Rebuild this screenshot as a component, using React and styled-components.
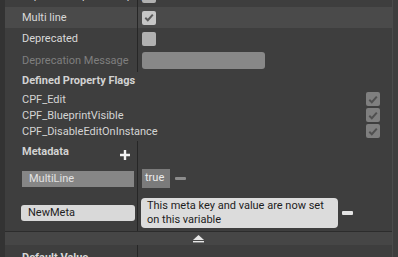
import styled, { createGlobalStyle } from "styled-components";

const GlobalStyle = createGlobalStyle`
  html, body {
    margin: 0;
    padding: 0;
    background: #3e3e3e;
  }
  body {
    font-family: Roboto, "Noto Sans", "Liberation Sans", sans-serif;
    font-size: 11px;
    color: #d8d8d8;
  }
`;

const Frame = styled.div`
  width: 398px;
  height: 257px;
  overflow: hidden;
  display: flex;
  background: #3e3e3e;
`;

const LeftStrip = styled.div`
  width: 5px;
  flex-shrink: 0;
  background: #333333;
`;

const Panel = styled.div`
  width: 387px;
  flex-shrink: 0;
  border-right: 1px solid #4b4b4b;
  display: flex;
  flex-direction: column;
  & > * {
    flex-shrink: 0;
  }
`;

const Scroll = styled.div`
  margin-top: -16px;
  display: flex;
  flex-direction: column;
`;

const Row = styled.div`
  display: grid;
  grid-template-columns: 132px 1px 1fr;
  height: ${(p) => p.h}px;
  flex-shrink: 0;
  background: ${(p) => (p.hl ? "#4a4a4a" : "transparent")};
`;

const Label = styled.div`
  display: flex;
  align-items: center;
  padding-left: 17px;
  color: ${(p) => (p.disabled ? "#7f7f7f" : "#d8d8d8")};
  font-weight: ${(p) => (p.bold ? 700 : 400)};
  white-space: nowrap;
`;

const Divider = styled.div`
  background: #262626;
`;

const Value = styled.div`
  display: flex;
  align-items: center;
  padding-left: ${(p) => p.pad ?? 4}px;
  gap: ${(p) => p.gap ?? 5}px;
`;

const Box = styled.div`
  width: 14px;
  height: 14px;
  border-radius: 2px;
  background: ${(p) => (p.disabled ? "#7f7f7f" : p.checked ? "#c6c6c6" : "#b1b1b1")};
  display: flex;
  align-items: center;
  justify-content: center;
`;

const TextField = styled.div`
  width: 123px;
  height: 17px;
  border-radius: 3px;
  background: #888888;
`;

const Section = styled.div`
  display: flex;
  flex-direction: column;
`;

const SectionHead = styled.div`
  height: 17px;
  display: flex;
  align-items: center;
  padding-left: 17px;
  font-weight: 700;
  color: #d2d2d2;
`;

const FlagList = styled.div`
  padding: 2px 0;
  display: flex;
  flex-direction: column;
`;

const FlagRow = styled.div`
  height: 16px;
  display: flex;
  align-items: center;
  justify-content: space-between;
  padding: 0 12px 0 17px;
  color: #d4d4d4;
`;

const MetaHead = styled.div`
  display: flex;
  justify-content: space-between;
  padding: 4px 7px 0 17px;
  font-weight: 700;
  color: #d2d2d2;
`;

const PlusButton = styled.div`
  margin-top: 5px;
  display: flex;
`;

const KeyField = styled.div`
  align-self: center;
  margin-left: ${(p) => (p.light ? 16 : 17)}px;
  width: ${(p) => (p.light ? 114 : 112)}px;
  height: 16px;
  border-radius: ${(p) => (p.light ? 3 : 0)}px;
  background: ${(p) => (p.light ? "#d9d9d9" : "#868686")};
  color: ${(p) => (p.light ? "#1e1e1e" : "#e2e2e2")};
  display: flex;
  align-items: center;
  padding-left: 7px;
  box-sizing: border-box;
`;

const TrueBox = styled.div`
  width: 28px;
  height: 19px;
  background: #7b7b7b;
  color: #ececec;
  padding: 2px 0 0 3px;
  box-sizing: border-box;
`;

const Minus = styled.div`
  width: 11px;
  height: ${(p) => (p.light ? 4 : 3)}px;
  border-radius: 1px;
  background: ${(p) => (p.light ? "#e4e4e4" : "#8c8c8c")};
  margin-top: ${(p) => (p.light ? 1 : 0)}px;
`;

const Tip = styled.div`
  width: 197px;
  height: 30px;
  border-radius: 4px;
  background: #dcdcdc;
  color: #1c1c1c;
  padding: 1px 6px;
  box-sizing: border-box;
  line-height: 14px;
`;

const Collapse = styled.div`
  border-top: 1px solid #2c2c2c;
  height: 13px;
  background: #464646;
  display: flex;
  align-items: center;
  justify-content: center;
`;

const Check = ({ dim }) => (
  <svg width="10" height="9" viewBox="0 0 10 9">
    <path d="M1.3 4.8 L3.8 7.2 L8.8 1.6" fill="none" stroke={dim ? "#505050" : "#5a5a5a"} strokeWidth="2" />
  </svg>
);

const flags = ["CPF_Edit", "CPF_BlueprintVisible", "CPF_DisableEditOnInstance"];

export default function App() {
  return (
    <>
      <GlobalStyle />
      <Frame>
        <LeftStrip />
        <Panel>
          <Scroll>
            <Row h={23}>
              <Label>Expose on Spawn Display</Label>
              <Divider />
              <Value>
                <Box />
              </Value>
            </Row>
            <Row h={21} hl>
              <Label>Multi line</Label>
              <Divider />
              <Value>
                <Box checked>
                  <Check />
                </Box>
              </Value>
            </Row>
            <Row h={21}>
              <Label>Deprecated</Label>
              <Divider />
              <Value>
                <Box />
              </Value>
            </Row>
            <Row h={23}>
              <Label disabled>Deprecation Message</Label>
              <Divider />
              <Value>
                <TextField />
              </Value>
            </Row>
          </Scroll>
          <Section>
            <SectionHead>Defined Property Flags</SectionHead>
            <FlagList>
              {flags.map((f) => (
                <FlagRow key={f}>
                  {f}
                  <Box disabled>
                    <Check dim />
                  </Box>
                </FlagRow>
              ))}
            </FlagList>
          </Section>
          <Row h={22}>
            <MetaHead>
              Metadata
              <PlusButton>
                <svg width="10" height="10" viewBox="0 0 10 10">
                  <path d="M5 0 V10 M0 5 H10" stroke="#f2f2f2" strokeWidth="2.4" />
                </svg>
              </PlusButton>
            </MetaHead>
            <Divider />
            <div />
          </Row>
          <Row h={31}>
            <KeyField>MultiLine</KeyField>
            <Divider />
            <Value>
              <TrueBox>true</TrueBox>
              <Minus />
            </Value>
          </Row>
          <Row h={37}>
            <KeyField light>NewMeta</KeyField>
            <Divider />
            <Value pad={3} gap={4}>
              <Tip>
                This meta key and value are now set
                <br />
                on this variable
              </Tip>
              <Minus light />
            </Value>
          </Row>
          <Collapse>
            <svg width="11" height="8" viewBox="0 0 11 8">
              <path d="M5.5 0 L11 5 H0 Z" fill="#e6e6e6" />
              <rect x="0" y="6" width="11" height="1.4" fill="#e6e6e6" />
            </svg>
          </Collapse>
          <Row h={24}>
            <Label bold>Default Value</Label>
            <Divider />
            <div />
          </Row>
        </Panel>
      </Frame>
    </>
  );
}
